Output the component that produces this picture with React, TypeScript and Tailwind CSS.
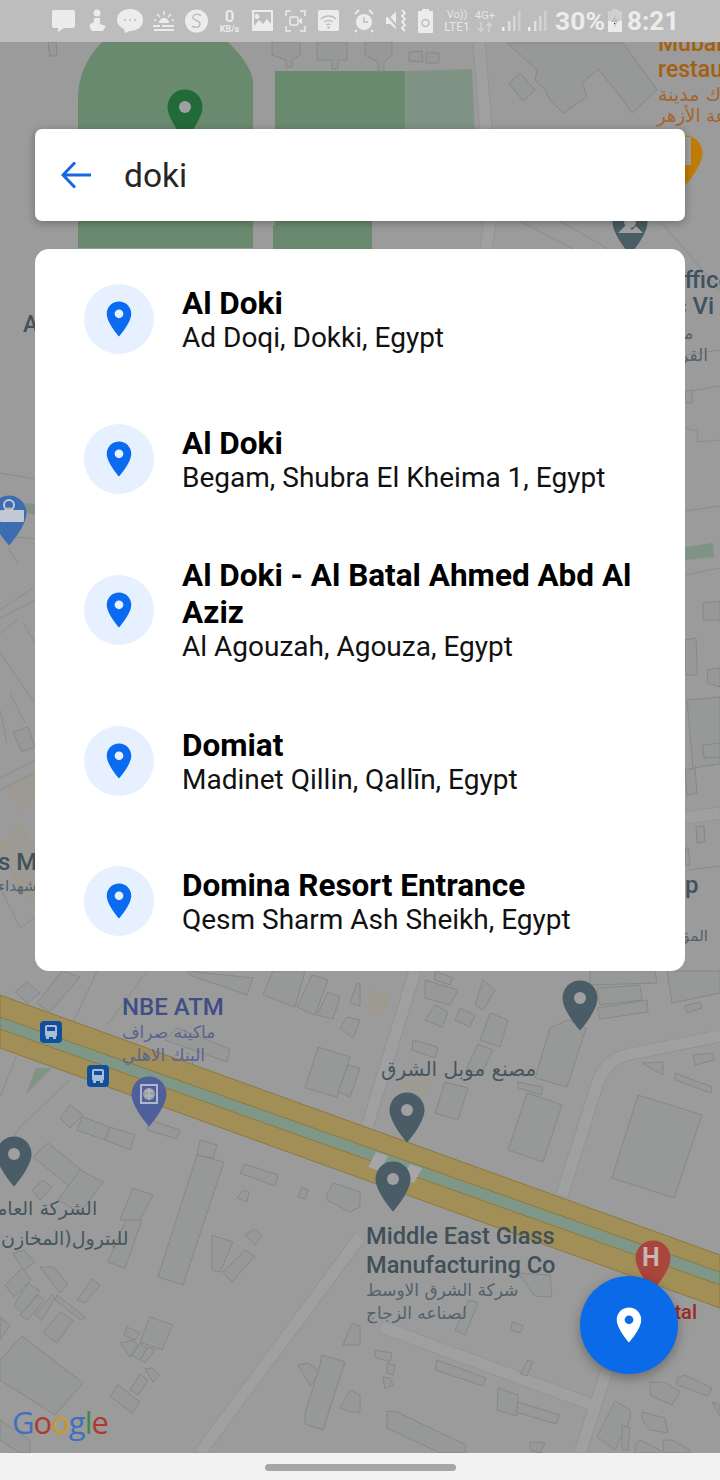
import { ReactNode } from "react";

const results = [
  { title: "Al Doki", sub: "Ad Doqi, Dokki, Egypt" },
  { title: "Al Doki", sub: "Begam, Shubra El Kheima 1, Egypt" },
  { title: "Al Doki - Al Batal Ahmed Abd Al Aziz", sub: "Al Agouzah, Agouza, Egypt" },
  { title: "Domiat", sub: "Madinet Qillin, Qallīn, Egypt" },
  { title: "Domina Resort Entrance", sub: "Qesm Sharm Ash Sheikh, Egypt" },
];

const placePath =
  "M12 2C8.13 2 5 5.13 5 9c0 5.25 7 13 7 13s7-7.75 7-13c0-3.87-3.13-7-7-7zm0 9.5a2.5 2.5 0 010-5 2.5 2.5 0 010 5z";

// building outlines on the map, page coordinates
const buildings = [
  "48,42 56,42 57,56 50,56",
  "272,42 300,42 300,55 292,60 292,67 286,67 286,60 272,55",
  "317,42 347,42 347,60 338,60 338,69 332,69 332,60 317,60",
  "365,42 392,42 392,55 384,62 384,71 378,71 378,62 365,55",
  "409,52 422,51 423,62 409,61",
  "426,53 439,53 439,63 426,63",
  "507,43 537,70 535,80 545,90 550,100 563,113 587,97 582,83 598,69 623,100 632,113 657,90 623,43",
  "509,83 520,73 535,90 523,101",
  "685,391 692,390 692,403 685,403",
  "703,603 720,601 720,620 703,620",
  "685,640 696,638 697,662 697,675 685,675",
  "707,670 720,668 720,687 708,683",
  "687,700 720,697 720,764 693,768",
  "703,745 720,743 720,757 704,758",
  "685,770 695,768 697,793 687,795",
  "696,827 704,826 705,842 697,843",
  "685,848 688,848 690,865 685,865",
  "13,732 28,727 35,747 22,752",
  // below the results card, left
  "15,992 27,982 40,993 27,1003",
  "37,1003 62,971 80,977 50,1012",
  "187,971 253,978 247,995 190,975",
  "263,995 273,971 305,971 295,1007",
  "297,1007 312,975 328,980 315,1015",
  "317,1015 328,992 340,997 333,1019",
  "350,1003 357,983 360,984 360,1006",
  "340,1028 347,1017 360,1020 353,1038",
  "305,1088 318,1047 350,1057 337,1097",
  "338,1092 348,1065 360,1068 350,1097",
  "165,1040 177,1028 230,1049 227,1062",
  "240,1173 245,1164 278,1175 275,1186",
  "237,1198 243,1190 249,1192 247,1202",
  "298,1197 302,1187 308,1190 305,1199",
  "327,1195 333,1183 360,1192 360,1207 350,1212 327,1200",
  "33,1157 48,1143 85,1173 70,1187",
  "32,1190 43,1180 52,1187 40,1200",
  "58,1200 80,1170 103,1182 80,1213",
  "120,1220 133,1188 153,1195 140,1220",
  "77,1130 82,1117 110,1127 105,1140",
  "105,1140 110,1127 135,1135 130,1150",
  "60,1118 70,1105 83,1115 70,1128",
  "147,1130 150,1120 180,1130 177,1139",
  "197,1155 200,1140 217,1145 213,1158",
  "158,1277 197,1155 224,1162 183,1285",
  // below the card, middle and right
  "425,980 458,990 450,1005 425,998",
  "435,971 453,978 450,985 435,980",
  "475,1005 483,980 495,990 483,1010",
  "425,1020 435,1005 448,1012 442,1027",
  "455,1020 460,1008 475,1015 470,1027",
  "480,1040 490,1013 508,1020 500,1047",
  "466,1070 478,1044 493,1050 482,1073",
  "413,1040 438,1047 435,1058 412,1050",
  "435,1113 445,1082 468,1088 458,1120",
  "535,1078 550,1028 568,1020 586,1028 567,1087",
  "518,1082 543,1087 541,1095 518,1088",
  "527,1093 562,1105 543,1162 508,1150",
  "590,971 655,971 657,983 590,985",
  "597,988 640,985 642,1000 600,1005",
  "597,1008 647,1000 648,1012 600,1019",
  "667,971 720,971 720,993 672,1003",
  "685,1006 700,1002 702,1008 687,1013",
  "693,1055 713,1053 714,1060 695,1065",
  "642,1063 663,1062 663,1075",
  "675,1073 712,1087 711,1093 675,1080",
  "638,1095 702,1115 674,1198 612,1178",
  // lower left
  "108,1262 125,1268 142,1220 126,1220",
  "212,1235 233,1242 220,1272 212,1270",
  "223,1272 245,1250 255,1256 232,1282",
  "245,1235 253,1229 262,1235 255,1245",
  "13,1253 24,1250 35,1262 23,1270",
  "5,1285 22,1268 31,1280 14,1297",
  "14,1305 28,1283 40,1291 22,1313",
  "20,1315 38,1295 44,1300 28,1320",
  "35,1315 52,1295 55,1298 42,1320",
  "40,1267 53,1267 68,1284 60,1293",
  "57,1295 85,1317 81,1320 55,1300",
  "77,1300 92,1279 100,1285 85,1303",
  "43,1333 60,1312 73,1320 57,1343",
  "0,1317 10,1325 0,1340",
  "22,1336 83,1383 55,1415 0,1380 0,1360",
  "0,1420 30,1440 30,1453 20,1453 0,1440",
  "150,1317 173,1325 162,1350 140,1342",
  "127,1327 140,1333 135,1340 124,1335",
  "120,1343 133,1340 138,1345 130,1357",
  "132,1355 140,1343 147,1348 140,1360",
  "140,1360 148,1347 155,1350 145,1363",
  "145,1369 152,1368 159,1375 153,1382",
  "130,1390 140,1374 148,1380 138,1395",
  "110,1396 118,1385 140,1402 132,1413",
  "298,1365 308,1363 320,1372 310,1386",
  "322,1355 345,1362 323,1430 305,1424 305,1413 320,1365",
  "340,1408 350,1390 360,1395 360,1412 352,1412",
  "343,1345 352,1323 360,1326 360,1345 355,1345",
  // lower right
  "437,1360 486,1378 483,1386 435,1370",
  "498,1388 518,1395 517,1416 497,1410",
  "518,1402 560,1415 556,1424 516,1412",
  "387,1411 397,1412 466,1445 465,1453 440,1453 387,1428",
  "530,1442 545,1443 540,1453 530,1450",
  "375,1350 392,1353 390,1362 375,1357",
  "387,1363 395,1365 393,1375 387,1373",
  "383,1377 390,1378 393,1385 385,1389",
  "512,1322 523,1326 520,1333 511,1330",
  "520,1374 528,1360 533,1362 527,1376",
  "455,1330 469,1300 478,1303 465,1335",
  "518,1273 550,1275 552,1297 535,1296",
  "597,1437 615,1401 630,1410 630,1420 615,1450",
  "622,1426 630,1427 628,1450 622,1450",
  "642,1412 665,1418 668,1433 650,1430 642,1420",
  "650,1382 665,1382 680,1392 672,1405 650,1395",
  "677,1378 685,1375 712,1388 708,1396 677,1385",
  "663,1440 672,1440 690,1450 688,1453 663,1453",
  "712,1402 720,1405 720,1416",
  "635,1445 640,1440 660,1450 660,1453 635,1453",
];

function MapPin({ x, y, fill, hole = "#a0a0a0" }: { x: number; y: number; fill: string; hole?: string }) {
  // x,y is the centre of the round head
  return (
    <g transform={`translate(${x - 30} ${y - 22.5}) scale(2.5)`}>
      <path d="M12 2C8.13 2 5 5.13 5 9c0 5.25 7 13 7 13s7-7.75 7-13c0-3.87-3.13-7-7-7z" fill={fill} />
      <circle cx="12" cy="9" r="2.4" fill={hole} />
    </g>
  );
}

function Bus({ x, y }: { x: number; y: number }) {
  return (
    <g transform={`translate(${x - 11} ${y - 11})`}>
      <rect width="22" height="22" rx="4" fill="#0f4f9e" />
      <rect x="5" y="4" width="12" height="12" rx="2" fill="#a9bdd6" />
      <rect x="7" y="6" width="8" height="4" fill="#0f4f9e" />
      <rect x="6" y="16" width="3" height="2" fill="#a9bdd6" />
      <rect x="13" y="16" width="3" height="2" fill="#a9bdd6" />
    </g>
  );
}

function MapCanvas() {
  return (
    <svg className="absolute inset-0 h-full w-full" viewBox="0 42 720 1411">
      <rect x="0" y="42" width="720" height="1411" fill="#9b9b9b" />

      {/* parks */}
      <path d="M102 42C86 58 78 78 78 98V248H253V80C250 66 240 54 228 42Z" fill="#6a8a70" />
      <path d="M275 71H405V221H372V249H273V225H275Z" fill="#6a8a70" />
      <path d="M405 71L472 69L475 135H405Z" fill="#7f9485" />
      <path d="M25 503L35 504V515L25 512Z" fill="#7f9485" />
      <path d="M685 547L713 543L714 557L685 560Z" fill="#7f9485" />
      <path d="M26 1094L52 1068H36Z" fill="#7f9485" />

      {/* small roads */}
      <g fill="none" strokeLinecap="butt">
        <g stroke="#8f9190" strokeWidth="13">
          <path d="M479 42L486 129M490 221L486 249" />
          <path d="M200 1453L360 1237" />
          <path d="M562 1195L597 1085C603 1068 612 1058 630 1054L720 1036" />
          <path d="M382 1327L593 1405" />
          <path d="M607 1370L580 1453" />
          <path d="M415 971L367 1127" />
          <path d="M685 818L720 813" />
        </g>
        <g stroke="#a0a0a0" strokeWidth="11.5">
          <path d="M479 42L486 129M490 221L486 249" />
          <path d="M200 1453L360 1237" />
          <path d="M562 1195L597 1085C603 1068 612 1058 630 1054L720 1036" />
          <path d="M382 1327L593 1405" />
          <path d="M607 1370L580 1453" />
          <path d="M415 971L367 1127" />
          <path d="M685 818L720 813" />
        </g>
      </g>
      <g fill="none" stroke="#8a8c8b" strokeWidth="1">
        <path d="M0 473L35 479" />
        <path d="M17 537L35 539" />
        <path d="M8 548L18 563" />
        <path d="M0 610L33 588M0 618L35 600" />
        <path d="M0 633L17 620M0 653L35 703M23 623L35 643" />
        <path d="M10 693L25 723M0 710L7 743" />
        <path d="M0 778L35 760M0 790L35 772" />
        <path d="M0 847L20 825L35 850" />
        <path d="M0 887L20 928L35 917" />
        <path d="M690 391L720 386M685 428L697 431L698 442L720 440" />
        <path d="M685 511L720 506M685 575L720 568" />
        <path d="M688 870L720 866" />
        <path d="M685 355L720 350" />
        <path d="M520 221L575 250M560 221L610 250M660 221L720 290" />
        <path d="M547 42L564 62L583 47" />
        <path d="M97 971L73 1023M147 971L107 1025" />
        <path d="M16 1057L0 1097M70 1080L20 1127L0 1160" />
      </g>

      {/* buildings */}
      <g fill="#979998" stroke="#868888" strokeWidth="1">
        {buildings.map((b) => (
          <polygon key={b} points={b} />
        ))}
      </g>

      {/* orange tinted blocks */}
      <g fill="#9c9a92" stroke="#a39a78" strokeWidth="1">
        <polygon points="7,790 35,773 35,797 21,810" />
        <polygon points="0,847 20,825 35,850 35,905 20,890" />
        <polygon points="373,990 388,997 383,1015 367,1010" />
        <polygon points="400,1085 413,1073 430,1080 425,1093" />
      </g>

      {/* highway */}
      <path d="M0 995L720 1255V1308L0 1048Z" fill="#a28f58" stroke="#8c7a3c" strokeWidth="1" />
      <path d="M0 1017L720 1272V1285L0 1029Z" fill="#7f9788" stroke="#8c7a3c" strokeWidth="1" />
      <path d="M376 1152L388 1156L380 1171L368 1167ZM410 1164L422 1168L414 1183L402 1179Z" fill="#a6a6a6" />

      {/* pins */}
      <MapPin x={185} y={107} fill="#226b38" />
      <MapPin x={685} y={153} fill="#c07c04" />
      <rect x="685" y="137" width="6" height="28" fill="#a0a0a0" />
      <MapPin x={630} y={222} fill="#4a5c66" />
      <path d="M618 233L627 224L632 230L636 226L643 233Z" fill="#a0a0a0" />
      <MapPin x={9} y={513} fill="#3d6cb0" />
      <rect x="0" y="510" width="24" height="12" rx="1" fill="#c2c9d4" />
      <circle cx="9" cy="505" r="5" fill="none" stroke="#c2c9d4" strokeWidth="2" />
      <MapPin x={149} y={1094} fill="#4f5f9a" />
      <rect x="141" y="1085" width="16" height="18" fill="none" stroke="#b0b6cb" strokeWidth="2" />
      <path d="M149 1088V1100M145 1091H153M145 1096H153" stroke="#b0b6cb" strokeWidth="1.5" />
      <MapPin x={14} y={1154} fill="#4a5c66" />
      <MapPin x={580} y={998} fill="#4a5c66" />
      <MapPin x={407} y={1110} fill="#4a5c66" />
      <MapPin x={393} y={1179} fill="#4a5c66" />
      <MapPin x={653} y={1258} fill="#a8453d" hole="#a8453d" />
      <Bus x={51} y={1032} />
      <Bus x={98} y={1076} />
    </svg>
  );
}

function MapLabels() {
  const ar = "font-['DejaVu_Sans','Noto_Sans',sans-serif]";
  return (
    <div className="absolute inset-0 overflow-hidden font-['Roboto',sans-serif]">
      <span className="absolute left-[658px] top-[-12px] text-[23px] leading-[28px] font-medium whitespace-nowrap text-[#a4600f]">Mubarak</span>
      <span className="absolute left-[658px] top-[14px] text-[23px] leading-[28px] font-medium whitespace-nowrap text-[#a4600f]">restaurant</span>
      <span className={`absolute left-[658px] top-[41px] text-[19px] leading-[22px] whitespace-nowrap text-[#a4652a] ${ar}`}>رك مدينة</span>
      <span className={`absolute left-[657px] top-[63px] text-[18px] leading-[22px] whitespace-nowrap text-[#a4652a] ${ar}`}>عة الأزهر</span>

      <span className="absolute left-[23px] top-[271px] text-[23px] leading-[24px] font-medium text-[#40525d]">A</span>
      <span className="absolute left-[668px] top-[224px] text-[24px] leading-[28px] font-medium whitespace-nowrap text-[#40525d]">Office</span>
      <span className="absolute left-[674px] top-[250px] text-[24px] leading-[28px] font-medium whitespace-nowrap text-[#40525d]">c Vi</span>
      <span className={`absolute left-[670px] top-[280px] text-[17px] leading-[22px] whitespace-nowrap text-[#53626b] ${ar}`}>مك</span>
      <span className={`absolute left-[680px] top-[302px] text-[17px] leading-[22px] whitespace-nowrap text-[#53626b] ${ar}`}>القر</span>

      <span className="absolute left-[-2px] top-[806px] text-[24px] leading-[28px] font-medium whitespace-nowrap text-[#40525d]">s Me</span>
      <span className={`absolute left-[-2px] top-[834px] text-[15px] leading-[20px] whitespace-nowrap text-[#53626b] ${ar}`}>شهداء</span>
      <span className="absolute left-[685px] top-[829px] text-[24px] leading-[28px] font-medium text-[#40525d]">p</span>
      <span className={`absolute left-[678px] top-[884px] text-[15px] leading-[20px] whitespace-nowrap text-[#53626b] ${ar}`}>المق</span>

      <span className="absolute left-[122px] top-[951px] text-[24px] leading-[28px] font-medium whitespace-nowrap text-[#3f4f86]">NBE ATM</span>
      <span className={`absolute left-[122px] top-[979px] text-[17px] leading-[22px] whitespace-nowrap text-[#5a6491] ${ar}`}>ماكينه صراف</span>
      <span className={`absolute left-[122px] top-[1002px] text-[17px] leading-[22px] whitespace-nowrap text-[#5a6491] ${ar}`}>البنك الاهلي</span>

      <span className={`absolute left-[381px] top-[1014px] text-[20px] leading-[26px] whitespace-nowrap text-[#46565f] ${ar}`}>مصنع موبل الشرق</span>

      <span className={`absolute left-[-13px] top-[1153px] text-[19px] leading-[26px] whitespace-nowrap text-[#46565f] ${ar}`}>الشركة العامة</span>
      <span className={`absolute left-[1px] top-[1183px] text-[19px] leading-[26px] whitespace-nowrap text-[#46565f] ${ar}`}>للبترول(المخازن</span>

      <span className="absolute left-[366px] top-[1180px] text-[23.6px] leading-[28px] font-medium whitespace-nowrap text-[#3f5058]">Middle East Glass</span>
      <span className="absolute left-[366px] top-[1209px] text-[23.6px] leading-[28px] font-medium whitespace-nowrap text-[#3f5058]">Manufacturing Co</span>
      <span className={`absolute left-[366px] top-[1237px] text-[17px] leading-[22px] whitespace-nowrap text-[#53626b] ${ar}`}>شركة الشرق الاوسط</span>
      <span className={`absolute left-[366px] top-[1260px] text-[17px] leading-[22px] whitespace-nowrap text-[#53626b] ${ar}`}>لصناعه الزجاج</span>

      <span className="absolute left-[642px] top-[1201px] text-[25px] leading-[30px] font-bold text-[#c9b5b2]">H</span>
      <span className="absolute right-[23px] top-[1258px] text-[20px] leading-[24px] font-medium whitespace-nowrap text-[#9b2a22]">Hospital</span>

      <span className="absolute left-[12px] top-[1360px] font-['Open_Sans',sans-serif] text-[31px] leading-[40px] tracking-[-1px] whitespace-nowrap">
        <span className="text-[#3f70bf]">G</span>
        <span className="text-[#ae3a30]">o</span>
        <span className="text-[#c99a1f]">o</span>
        <span className="text-[#3f70bf]">g</span>
        <span className="text-[#3d8a4c]">l</span>
        <span className="text-[#ae3a30]">e</span>
      </span>
    </div>
  );
}

function StatusIcon({ w, ml, children }: { w: number; ml?: string; children: ReactNode }) {
  return (
    <svg width={w} height="24" viewBox={`0 0 ${w} 24`} className={`shrink-0 ${ml ?? ""}`} fill="#ececec">
      {children}
    </svg>
  );
}

function StatusBar() {
  return (
    <div className="flex h-[42px] shrink-0 items-center bg-[#bdbdbd] pl-[52px] font-['Roboto',sans-serif] text-[#ececec]">
      <StatusIcon w={23}>
        <path d="M2 1H21Q23 1 23 3V17Q23 19 21 19H12L6 23V19H2Q0 19 0 17V3Q0 1 2 1Z" />
      </StatusIcon>
      <StatusIcon w={19} ml="ml-[13px]">
        <circle cx="9" cy="4" r="3.5" />
        <path d="M6 9H12V15L18 17L15 22H4Q1 19 2 15L6 13Z" />
      </StatusIcon>
      <StatusIcon w={26} ml="ml-[10px]">
        <path d="M13 0C20 0 26 4 26 11C26 18 20 22 13 22L8 24L7 20C3 18 0 15 0 11C0 4 6 0 13 0Z" />
        <circle cx="8" cy="11" r="1" fill="#bdbdbd" />
        <circle cx="13" cy="11" r="1" fill="#bdbdbd" />
        <circle cx="18" cy="11" r="1" fill="#bdbdbd" />
      </StatusIcon>
      <StatusIcon w={22} ml="ml-[10px]">
        <path d="M6 14A5 5 0 0 1 16 14ZM0 16H7V18H0ZM1 20H21V22H1ZM9 16H21V18H9Z" />
        <path d="M11 2V6M4 5L7 8M18 5L15 8M1 11H3M19 11H21" stroke="#ececec" strokeWidth="1.5" />
      </StatusIcon>
      <StatusIcon w={23} ml="ml-[10px]">
        <circle cx="11.5" cy="12" r="11.5" />
        <path d="M16 7C14 4 7 5 8 9C9 12 15 11 15 15C15 19 9 19 7 17" fill="none" stroke="#bdbdbd" strokeWidth="1.5" />
      </StatusIcon>
      <div className="ml-[9px] flex w-[25px] shrink-0 flex-col items-center">
        <span className="text-[17px] leading-[17px] font-medium">0</span>
        <span className="text-[9px] leading-[9px] font-bold">KB/s</span>
      </div>
      <StatusIcon w={21} ml="ml-[10px]">
        <path fillRule="evenodd" d="M0 1H21V22H0ZM2 3V17L7 11L11 15L15 10L19 15V3ZM5 5A2.5 2.5 0 1 0 5.01 5Z" />
      </StatusIcon>
      <StatusIcon w={21} ml="ml-[12px]">
        <path d="M1 7V2H6M15 2H20V7M20 17V22H15M6 22H1V17" fill="none" stroke="#ececec" strokeWidth="1.5" />
        <rect x="5" y="8" width="8" height="8" rx="1.5" fill="none" stroke="#ececec" strokeWidth="1.5" />
        <path d="M14 11L17 9V15L14 13Z" />
      </StatusIcon>
      <StatusIcon w={21} ml="ml-[12px]">
        <path d="M2 1H19Q21 1 21 3V20Q21 22 19 22H2Q0 22 0 20V3Q0 1 2 1Z" />
        <path d="M3 10C7 6 14 6 18 10M6 13C8.5 11 12.5 11 15 13M8.5 16C9.5 15 11.5 15 12.5 16" fill="none" stroke="#bdbdbd" strokeWidth="1.5" />
        <circle cx="10.5" cy="18.5" r="1.2" fill="#bdbdbd" />
      </StatusIcon>
      <StatusIcon w={23} ml="ml-[14px]">
        <circle cx="11" cy="13" r="8" />
        <path d="M11 8V13H15" fill="none" stroke="#bdbdbd" strokeWidth="1.5" />
        <path d="M2 5L6 1M20 5L16 1M4 21L2 23M18 21L20 23" stroke="#ececec" strokeWidth="2" />
      </StatusIcon>
      <StatusIcon w={21} ml="ml-[9px]">
        <path d="M1 8H5L11 3V20L5 15H1Z" />
        <path d="M0 3L14 20" stroke="#bdbdbd" strokeWidth="2" />
        <path d="M17 1L20 4L17 7L20 10L17 13L20 16L17 19L20 22" fill="none" stroke="#ececec" strokeWidth="1.8" />
      </StatusIcon>
      <StatusIcon w={15} ml="ml-[12px]">
        <path d="M4 0H11V2H14Q15 2 15 3V23Q15 24 14 24H1Q0 24 0 23V3Q0 2 1 2H4Z" />
        <circle cx="7.5" cy="14" r="3.5" fill="none" stroke="#bdbdbd" strokeWidth="1.5" />
      </StatusIcon>
      <div className="ml-[11px] flex w-[26px] shrink-0 flex-col items-center text-[11px] leading-[12px] text-[#e6e6e6]">
        <span>Vo))</span>
        <span className="text-[12px]">LTE1</span>
      </div>
      <div className="ml-[4px] flex w-[22px] shrink-0 flex-col items-center text-[#e6e6e6]">
        <span className="text-[11px] leading-[12px]">4G+</span>
        <svg width="16" height="10" viewBox="0 0 16 10" fill="none" stroke="#d4d4d4" strokeWidth="1.5">
          <path d="M4 0V9M1 6L4 9L7 6M12 10V1M9 4L12 1L15 4" />
        </svg>
      </div>
      <StatusIcon w={19} ml="ml-[6px]">
        <rect x="0" y="18" width="2.5" height="4" />
        <rect x="6" y="12" width="2.5" height="10" fill="#e0e0e0" />
        <rect x="11" y="7" width="2.5" height="15" fill="#d6d6d6" />
        <rect x="16" y="2" width="2.5" height="20" fill="#cfcfcf" />
      </StatusIcon>
      <StatusIcon w={19} ml="ml-[7px]">
        <rect x="0" y="18" width="2.5" height="4" />
        <rect x="6" y="12" width="2.5" height="10" fill="#e0e0e0" />
        <rect x="11" y="7" width="2.5" height="15" fill="#d6d6d6" />
        <rect x="16" y="2" width="2.5" height="20" fill="#cfcfcf" />
      </StatusIcon>
      <span className="ml-[8px] text-[26.5px] leading-none font-bold whitespace-nowrap">30%</span>
      <StatusIcon w={14} ml="ml-[3px]">
        <path d="M4 0H10V2H14V12H0V2H4Z" fill="#d0d0d0" />
        <path d="M0 12H14V23H0Z" />
        <path d="M8 5L3 13H7L6 19L11 10H7Z" fill="#bdbdbd" />
        <path d="M7 14L6 15" stroke="#333333" strokeWidth="1" />
      </StatusIcon>
      <span className="ml-[5px] text-[26px] leading-none font-bold whitespace-nowrap">8:21</span>
    </div>
  );
}

function ResultRow({ title, sub }: { title: string; sub: string }) {
  return (
    <div className="flex min-h-[140px] items-center py-[28px] pr-[35px] pl-[49px]">
      <div className="flex h-[70px] w-[70px] shrink-0 items-center justify-center rounded-full bg-[#e6f0ff]">
        <svg width="42" height="42" viewBox="0 0 24 24" fill="#0a6af0">
          <path d={placePath} />
        </svg>
      </div>
      <div className="ml-[28px] min-w-0 flex-1">
        <p className="text-[31.5px] leading-[37px] font-bold text-black">{title}</p>
        <p className="text-[28px] leading-[32px] text-[#111111]">{sub}</p>
      </div>
    </div>
  );
}

export default function App() {
  return (
    <div className="flex h-[1480px] w-[720px] flex-col overflow-hidden bg-[#f2f2f2] font-['Roboto',sans-serif]">
      <StatusBar />

      <div className="relative flex-1 overflow-hidden">
        <MapCanvas />
        <MapLabels />

        <div className="relative px-[35px] pt-[87px]">
          <div className="flex h-[92px] items-center rounded-[7px] bg-white shadow-[0_2px_8px_rgba(0,0,0,0.3)]">
            <svg width="30" height="28" viewBox="0 0 30 28" fill="none" stroke="#1668e0" strokeWidth="3" className="ml-[26px]">
              <path d="M30 14H3M14 1.5L2 14L14 26.5" />
            </svg>
            <span className="ml-[33px] pt-[1px] text-[33.5px] leading-none text-[#262626]">doki</span>
          </div>

          <div className="mt-[28px] rounded-[14px] bg-white">
            {results.map((r, i) => (
              <ResultRow key={i} title={r.title} sub={r.sub} />
            ))}
          </div>
        </div>

        <button className="absolute top-[1234px] left-[580px] flex h-[98px] w-[98px] items-center justify-center rounded-full bg-[#0a6ae8] shadow-[0_4px_12px_rgba(0,0,0,0.3)]">
          <svg width="42" height="42" viewBox="0 0 24 24" fill="#ffffff">
            <path d={placePath} />
          </svg>
        </button>
      </div>

      <div className="flex h-[27px] shrink-0 items-end justify-center bg-[#f2f2f2] pb-[9px]">
        <div className="h-[7px] w-[191px] rounded-full bg-[#a6a6a6]" />
      </div>
    </div>
  );
}
